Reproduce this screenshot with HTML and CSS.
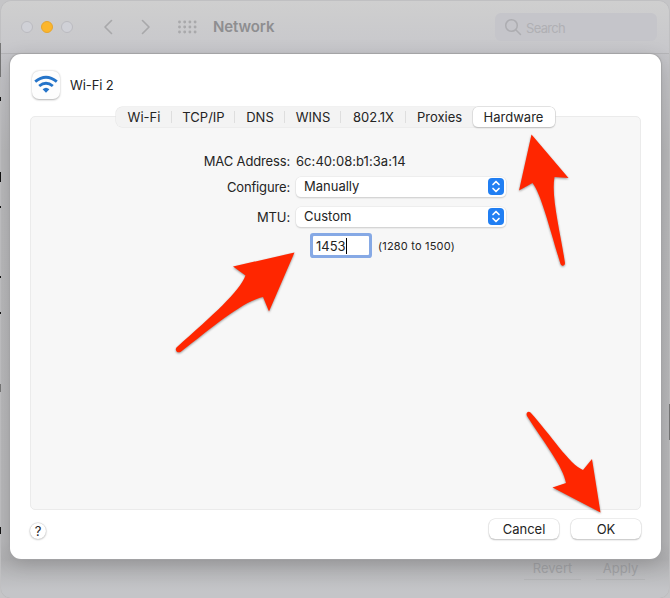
FILE: index.html
```html
<!DOCTYPE html>
<html lang="en">
<head>
<meta charset="utf-8">
<title>Network</title>
<link rel="stylesheet" href="styles.css">
</head>
<body>
<div class="desktop-marks">
  <svg width="670" height="598"><path d="M0 97h1v4h-1zM0 172h1v10h-1zM0 206h1v2h-1zM0 276h1v2h-1zM0 312h1v2h-1zM0 527h1v7h-1z" fill="#111"/><path d="M0 43h1v34h-1zM0 384h1v8h-1zM669 404h1v36h-1z" fill="#777"/></svg>
</div>
<div class="window">
  <header class="titlebar">
    <div class="lights"><i></i><i class="minimize"></i><i></i></div>
    <div class="nav">
      <svg width="46" height="16" viewBox="0 0 46 16"><path d="M7.500 1.500 1 8 7.500 14.500M38.500 1.500 45 8 38.500 14.500" fill="none" stroke="#a8a8aa" stroke-width="1.600" stroke-linecap="round" stroke-linejoin="round"/></svg>
    </div>
    <svg class="grid-icon" width="19" height="14" viewBox="0 0 19 14"><path d="M1.500 2h16.500M1.500 7h16.500M1.500 12h16.500" stroke="#a9a9ab" stroke-width="2.900" stroke-dasharray="0 5.200" stroke-linecap="round"/></svg>
    <h1>Network</h1>
    <div class="search">
      <svg width="18" height="18" viewBox="0 0 18 18" fill="none" stroke="#adadb1" stroke-width="1.500" stroke-linecap="round"><circle cx="7.500" cy="7.500" r="5.800"/><path d="m12 12 4.500 4.500"/></svg>
      <span>Search</span>
    </div>
  </header>
  <footer class="window-actions"><span>Revert</span><span>Apply</span></footer>
</div>

<main class="sheet">
  <div class="service">
    <div class="wifi">
      <svg width="28" height="28" viewBox="0 0 28 28"><g fill="none" stroke="#2574c9" stroke-width="2.900"><path d="M3.200 10.700Q14 2 24.800 10.700"/><path d="M7.200 15Q14 9.300 20.800 15"/></g><path d="M10.600 18.300Q14 15.300 17.400 18.300L14 21.700Z" fill="#2574c9"/></svg>
    </div>
    <span>Wi-Fi 2</span>
  </div>
  <nav class="tabs">
    <span>Wi-Fi</span><span>TCP/IP</span><span>DNS</span><span>WINS</span><span>802.1X</span><span>Proxies</span><span class="selected">Hardware</span>
  </nav>
  <section class="panel">
    <div class="form">
      <label>MAC Address:</label><span class="mac">6c:40:08:b1:3a:14</span>
      <label>Configure:</label>
      <div class="select"><span>Manually</span><svg width="16" height="17" viewBox="0 0 16 17"><rect width="16" height="17" rx="4"/><path d="m5 6.500 3-3 3 3M5 10.500l3 3 3-3"/></svg></div>
      <label>MTU:</label>
      <div class="select"><span>Custom</span><svg width="16" height="17" viewBox="0 0 16 17"><rect width="16" height="17" rx="4"/><path d="m5 6.500 3-3 3 3M5 10.500l3 3 3-3"/></svg></div>
      <div class="custom"><div class="field">1453<i></i></div><small>(1280 to 1500)</small></div>
    </div>
  </section>
  <footer class="actions"><span class="help">?</span><span class="button">Cancel</span><span class="button">OK</span></footer>
</main>

<svg class="arrows" width="670" height="598" viewBox="0 0 670 598">
  <path d="M294.500 252.500 233 266.500 245.500 275.500C239 292 214 314 176.500 347.500C174.500 350 177 353.500 180.500 352C213 327 242 302 263 297L269 311.500Z"/>
  <path d="M531.500 134.500 519 190.500 532.500 183C541 194 549 226 560.500 264C562 267 565 266 565 263C560 230 551 197 554.500 177L568.500 178Z"/>
  <path d="M600.500 512.500 592 459 583 470C569 464 551 435 530.500 412.500C528 410.500 525.500 413 527 416C544 443 563 466 566 483L552.500 487.500Z"/>
</svg>
</body>
</html>
```
FILE: styles.css
```css
* { box-sizing: border-box; }
body {
  margin: 0;
  width: 670px;
  height: 598px;
  overflow: hidden;
  background: #c5c5c7;
  color: #242424;
  font: 13px/16px Inter, "Liberation Sans", sans-serif;
}
i { display: block; }
.desktop-marks, .arrows { position: absolute; inset: 0; pointer-events: none; }
.window {
  display: flex;
  flex-direction: column;
  justify-content: space-between;
  width: 668px;
  height: 597px;
  margin: 1px 1px 0;
  border-radius: 10px;
  background: linear-gradient(#c5c5c9 52px, #b9b9bb 150px, #b8b8ba 540px, #b0b0b2 558px, #c4c5c8 590px);
  box-shadow: 0 0 1px #999;
  overflow: hidden;
}
.titlebar {
  display: flex;
  align-items: center;
  height: 53px;
  padding: 0 12px 0 20px;
  background: linear-gradient(#cfcfcf, #c7c7cb);
  border-bottom: 1px solid #b5b5b8;
}
.lights { display: flex; gap: 8px; }
.lights i { width: 12px; height: 12px; border: 1px solid #bbbbc0; border-radius: 50%; background: #d0d1d7; }
.lights .minimize { border-color: #e6a52e; background: #fcb62c; }
.nav { margin-left: 31px; }
.nav svg { display: block; }
.grid-icon { margin-left: 28px; }
h1 { margin: 0 0 0 16px; color: #8e8e90; font-size: 15px; line-height: 20px; font-weight: 600; letter-spacing: -.1px; }
.search {
  display: flex;
  align-items: center;
  gap: 4px;
  width: 162px;
  height: 28px;
  margin-left: auto;
  padding-left: 9px;
  border-radius: 6px;
  background: #c5c5ca;
  color: #b0b0b4;
}
.search span { letter-spacing: -.7px; padding-top: 1px; }
.window-actions { display: flex; justify-content: flex-end; gap: 15px; padding: 0 24px 18px 0; color: #a0a1a4; }
.window-actions span { width: 56px; height: 20px; border-bottom: 1px solid #b3b4b6; text-align: center; }
.window-actions span:first-child { width: 57px; }
.window-actions span:last-child { width: 49px; }
.sheet {
  position: absolute;
  left: 10px;
  top: 54px;
  width: 651px;
  height: 505px;
  padding: 17px 20px 0;
  border-radius: 11px;
  background: #fff;
  box-shadow: 0 0 1px 1px #a4a4a6, 0 5px 20px rgba(0,0,0,.18);
}
.service { display: flex; align-items: center; gap: 10px; height: 28px; padding-left: 2px; }
.service > span { letter-spacing: -.1px; }
.wifi { width: 28px; height: 28px; border-radius: 7px; background: #fdfdfd; box-shadow: 0 .5px 2px rgba(0,0,0,.3); }
.wifi svg { display: block; }
.tabs {
  display: grid;
  grid-template-columns: 56px 63px 50px 56px 65px 67px 82px;
  position: relative;
  z-index: 1;
  width: 439px;
  height: 20px;
  margin: 8px 0 0 86px;
  border-radius: 6px;
  background: #f3f3f3;
  box-shadow: 0 0 0 .5px #e4e4e4;
  line-height: 20px;
  text-align: center;
}
.tabs span { background: linear-gradient(#dedede, #dedede) right 4px / 1px 12px no-repeat; }
.tabs span:nth-child(6) { background: none; }
.tabs .selected { padding-right: 1px; border-radius: 5px; background: #fff; box-shadow: 0 0 0 .5px #d3d3d3, 0 1px 1.5px rgba(0,0,0,.28); }
.panel { height: 394px; margin-top: -11px; padding-top: 36px; border: 1px solid #ebebeb; border-radius: 5px; background: #f7f7f7; }
.form {
  display: grid;
  grid-template-columns: 259px 210px;
  grid-template-rows: 16px 35px 25px 33px;
  column-gap: 6px;
  align-items: center;
}
.form label { text-align: right; letter-spacing: -.15px; }
.mac { letter-spacing: .05px; }
.select {
  display: flex;
  align-items: center;
  justify-content: space-between;
  height: 20px;
  padding: 0 2px 0 8px;
  border-radius: 5px;
  background: #fff;
  box-shadow: 0 0 0 .5px #e5e5e5, 0 1px 1.5px rgba(0,0,0,.25);
}
.select span { margin-top: -1px; }
.select rect { fill: #217ff3; }
.select path { fill: none; stroke: #fff; stroke-width: 1.7; stroke-linecap: round; stroke-linejoin: round; }
.custom { grid-column: 2; display: flex; align-items: center; gap: 9px; padding-left: 17px; }
.field { display: flex; align-items: center; width: 56px; height: 19px; padding-left: 3px; background: #fff; box-shadow: 0 0 0 3px #86a9e5; border-radius: 1px; }
.field i { width: 1px; height: 16px; background: #000; }
small { font-size: 11px; letter-spacing: .2px; }
.actions { display: flex; align-items: center; gap: 12px; height: 22px; margin-top: 8px; }
.help { width: 16px; height: 16px; margin: 4px auto 0 0; border-radius: 50%; box-shadow: 0 0 0 .5px #ddd, 0 .5px 2px rgba(0,0,0,.35); text-align: center; }
.button { width: 70px; height: 20px; border-radius: 6px; line-height: 20px; text-align: center; box-shadow: 0 0 0 .5px #ddd, 0 1px 1.5px rgba(0,0,0,.3); }
.arrows path { fill: #ff2600; filter: drop-shadow(0 1px 1px rgba(0,0,0,.4)); }
```
